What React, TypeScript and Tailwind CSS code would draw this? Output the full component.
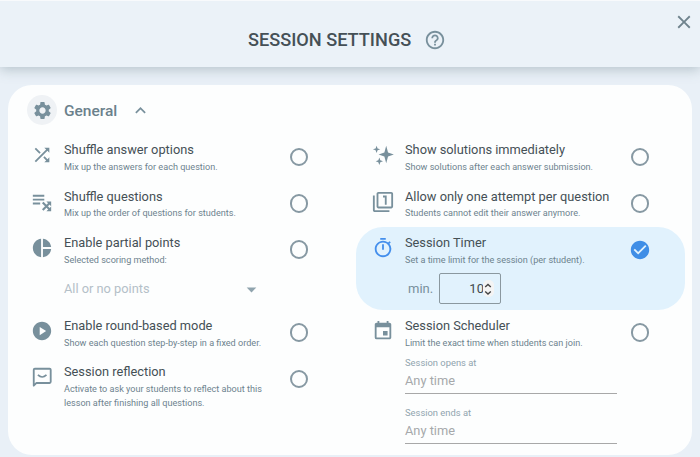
import React, { useState } from 'react';
import {
  MdArrowDropDown,
  MdCheckCircle,
  MdClose,
  MdEvent,
  MdExpandLess,
  MdHelpOutline,
  MdOutlineFilter1,
  MdOutlineTimer,
  MdPieChart,
  MdPlayCircle,
  MdSettings,
  MdShuffle,
} from 'react-icons/md';

const ShuffleListIcon: React.FC = () => (
  <svg viewBox="0 0 24 24" className="w-[22px] h-[22px]" fill="none" stroke="currentColor" strokeWidth="2.1">
    <path d="M2 5.2h12.5M2 9.4h12.5M2 13.6h8" />
    <path d="M12.8 12.6l7.6 7.6M12.8 20.6l7.6-7.6" strokeWidth="2.3" />
    <path d="M16.8 11.4h5.2v5.2zM16.8 22h5.2v-5.2z" fill="currentColor" stroke="none" />
  </svg>
);

const SparklesIcon: React.FC = () => (
  <svg viewBox="0 0 24 24" className="w-[22px] h-[22px]" fill="currentColor">
    <path d="M15.5 2l2 7.3 6.3 2.2-6.3 2.2-2 7.3-2-7.3-6.3-2.2 6.3-2.2z" />
    <path d="M5 1.8l1.1 3 2.9 1-2.9 1-1.1 3-1.1-3-2.9-1 2.9-1zM8 14.8l1.1 3 2.9 1-2.9 1L8 23l-1.1-3.2-2.9-1 2.9-1z" />
  </svg>
);

const ReflectionIcon: React.FC = () => (
  <svg viewBox="0 0 24 24" className="w-[22px] h-[22px]" fill="none" stroke="currentColor" strokeWidth="2">
    <path d="M3 21.5V4.2Q3 3 4.2 3h16.1q1.2 0 1.2 1.2v13.1q0 1.2-1.2 1.2H6z" strokeLinejoin="round" />
    <path d="M7.5 9.7q4.7 4.6 9.4 0" strokeWidth="1.8" />
  </svg>
);

interface OptionProps {
  icon: React.ReactNode;
  title: string;
  description: string;
  checked?: boolean;
  tall?: boolean;
  onToggle: () => void;
  children?: React.ReactNode;
}

const Option: React.FC<OptionProps> = ({ icon, title, description, checked, tall, onToggle, children }) => (
  <div
    className={`flex w-[329px] shrink-0 pl-[16.4px] ${tall ? 'h-[83px]' : 'h-[46.3px]'} ${
      checked ? 'bg-[#e1f2fd] rounded-[27px]' : ''
    }`}
  >
    <div className={`w-[32.6px] shrink-0 pt-[10.4px] ${checked ? 'text-[#448fec]' : 'text-[#78909c]'}`}>{icon}</div>
    <div className="w-[212px] shrink-0 pt-[8.4px]">
      <h3 className="text-[12.8px] leading-4 text-[#455056] whitespace-nowrap">{title}</h3>
      <p className="mt-[1.6px] text-[9.1px] leading-[14.5px] text-[#6d838e] whitespace-pre">{description}</p>
      {children}
    </div>
    <button onClick={onToggle} className="ml-[12px] mt-[12px] w-[22px] h-[22px] flex items-center justify-center">
      {checked ? (
        <MdCheckCircle className="w-[22px] h-[22px] shrink-0 text-[#3f8ee6]" />
      ) : (
        <span className="w-[18.5px] h-[18.5px] rounded-full border-2 border-[#8799a3]" />
      )}
    </button>
  </div>
);

const DateField: React.FC<{ label: string; className: string }> = ({ label, className }) => (
  <div className={`w-[212px] border-b border-[#a8a8a8] ${className}`}>
    <div className="text-[9.4px] leading-3 text-[#90a4ae]">{label}</div>
    <div className="mt-[4px] text-[12.8px] leading-4 text-[#a6a9ab]">Any time</div>
  </div>
);

const App: React.FC = () => {
  const [enabled, setEnabled] = useState<Record<string, boolean>>({ timer: true });
  const toggle = (key: string) => setEnabled((prev) => ({ ...prev, [key]: !prev[key] }));
  const iconClass = 'w-[22px] h-[22px]';

  return (
    <div className="w-[700px] h-[457px] overflow-hidden bg-[#e9f0f7] border-t border-[#f8fafc] font-['Roboto',sans-serif] flex flex-col">
      {/* Header */}
      <header className="relative h-[66px] shrink-0 bg-[#ebf2f8] shadow-[0_2px_12px_rgba(84,110,122,0.38)] flex items-center">
        <h1 className="ml-[248px] mt-[12px] text-[18.15px] leading-6 font-medium text-[#455056]">
          SESSION SETTINGS
        </h1>
        <MdHelpOutline className="ml-[13px] mt-[12px] w-[22px] h-[22px] text-[#78909c]" />
        <button className="absolute right-[5px] top-[10px] text-[#6f838d]">
          <MdClose className="w-[22px] h-[22px]" />
        </button>
      </header>

      {/* Settings card */}
      <main className="mt-[18px] ml-[8px] w-[684px] h-[370px] shrink-0 rounded-[24px] bg-[#fdfefe] px-[7px]">
        <div className="h-[49px] flex items-center pl-[12px] pt-px">
          <div className="w-[30px] h-[30px] rounded-full bg-[#eff2f5] flex items-center justify-center text-[#78909c]">
            <MdSettings className="w-[21px] h-[21px]" />
          </div>
          <h2 className="ml-[7px] mt-[2px] text-[15.5px] leading-6 font-medium text-[#6b818c]">General</h2>
          <MdExpandLess className="ml-[12.5px] w-[21px] h-[21px] text-[#78909c]" />
        </div>

        <div className="flex gap-3">
          <div className="flex flex-col">
            <Option
              icon={<MdShuffle className={iconClass} />}
              title="Shuffle answer options"
              description="Mix up the answers for each question."
              checked={enabled.answers}
              onToggle={() => toggle('answers')}
            />
            <Option
              icon={<ShuffleListIcon />}
              title="Shuffle questions"
              description="Mix up the order of questions for students."
              checked={enabled.questions}
              onToggle={() => toggle('questions')}
            />
            <Option
              icon={<MdPieChart className={iconClass} />}
              title="Enable partial points"
              description="Selected scoring method:"
              checked={enabled.partial}
              onToggle={() => toggle('partial')}
              tall
            >
              <div className="mt-[14px] w-[199px] flex items-center justify-between text-[#b4c0c8]">
                <span className="text-[12.8px] leading-4">All or no points</span>
                <MdArrowDropDown className="w-[23px] h-[23px] -my-1 text-[#90a4ae]" />
              </div>
            </Option>
            <Option
              icon={<MdPlayCircle className={iconClass} />}
              title="Enable round-based mode"
              description="Show each question step-by-step in a fixed order."
              checked={enabled.rounds}
              onToggle={() => toggle('rounds')}
            />
            <Option
              icon={<ReflectionIcon />}
              title="Session reflection"
              description={'Activate to ask your students to reflect about this\nlesson after finishing all questions.'}
              checked={enabled.reflection}
              onToggle={() => toggle('reflection')}
            />
          </div>

          <div className="flex flex-col">
            <Option
              icon={<SparklesIcon />}
              title="Show solutions immediately"
              description="Show solutions after each answer submission."
              checked={enabled.solutions}
              onToggle={() => toggle('solutions')}
            />
            <Option
              icon={<MdOutlineFilter1 className={iconClass} />}
              title="Allow only one attempt per question"
              description="Students cannot edit their answer anymore."
              checked={enabled.attempt}
              onToggle={() => toggle('attempt')}
            />
            <Option
              icon={<MdOutlineTimer className={iconClass} />}
              title="Session Timer"
              description="Set a time limit for the session (per student)."
              checked={enabled.timer}
              onToggle={() => toggle('timer')}
              tall
            >
              <div className="mt-[6px] ml-[3px] flex items-center">
                <span className="w-[25px] text-[13px] text-[#78909c]">min.</span>
                <div className="ml-[6px] w-[62px] h-[31px] rounded-[2px] border border-[#8a989f] flex items-center justify-end pr-[6px]">
                  <span className="-mr-px text-[13px] text-[#424a4e]">10</span>
                  <span className="w-[11px] h-[17px] rounded-[5px] bg-[#f4f4f4] flex items-center justify-center">
                    <svg viewBox="0 0 8 14" className="w-[8px] h-[14px]" fill="none" stroke="#444" strokeWidth="1.4">
                      <path d="M1.2 5L4 2.5 6.8 5M1.2 9.5L4 12l2.8-2.5" />
                    </svg>
                  </span>
                </div>
              </div>
            </Option>
            <Option
              icon={<MdEvent className={iconClass} />}
              title="Session Scheduler"
              description="Limit the exact time when students can join."
              checked={enabled.scheduler}
              onToggle={() => toggle('scheduler')}
            />
            <div className="pl-[49px] pt-px">
              <DateField label="Session opens at" className="h-[37px]" />
              <DateField label="Session ends at" className="mt-[13px] h-[37px]" />
            </div>
          </div>
        </div>
      </main>
    </div>
  );
};

export default App;
